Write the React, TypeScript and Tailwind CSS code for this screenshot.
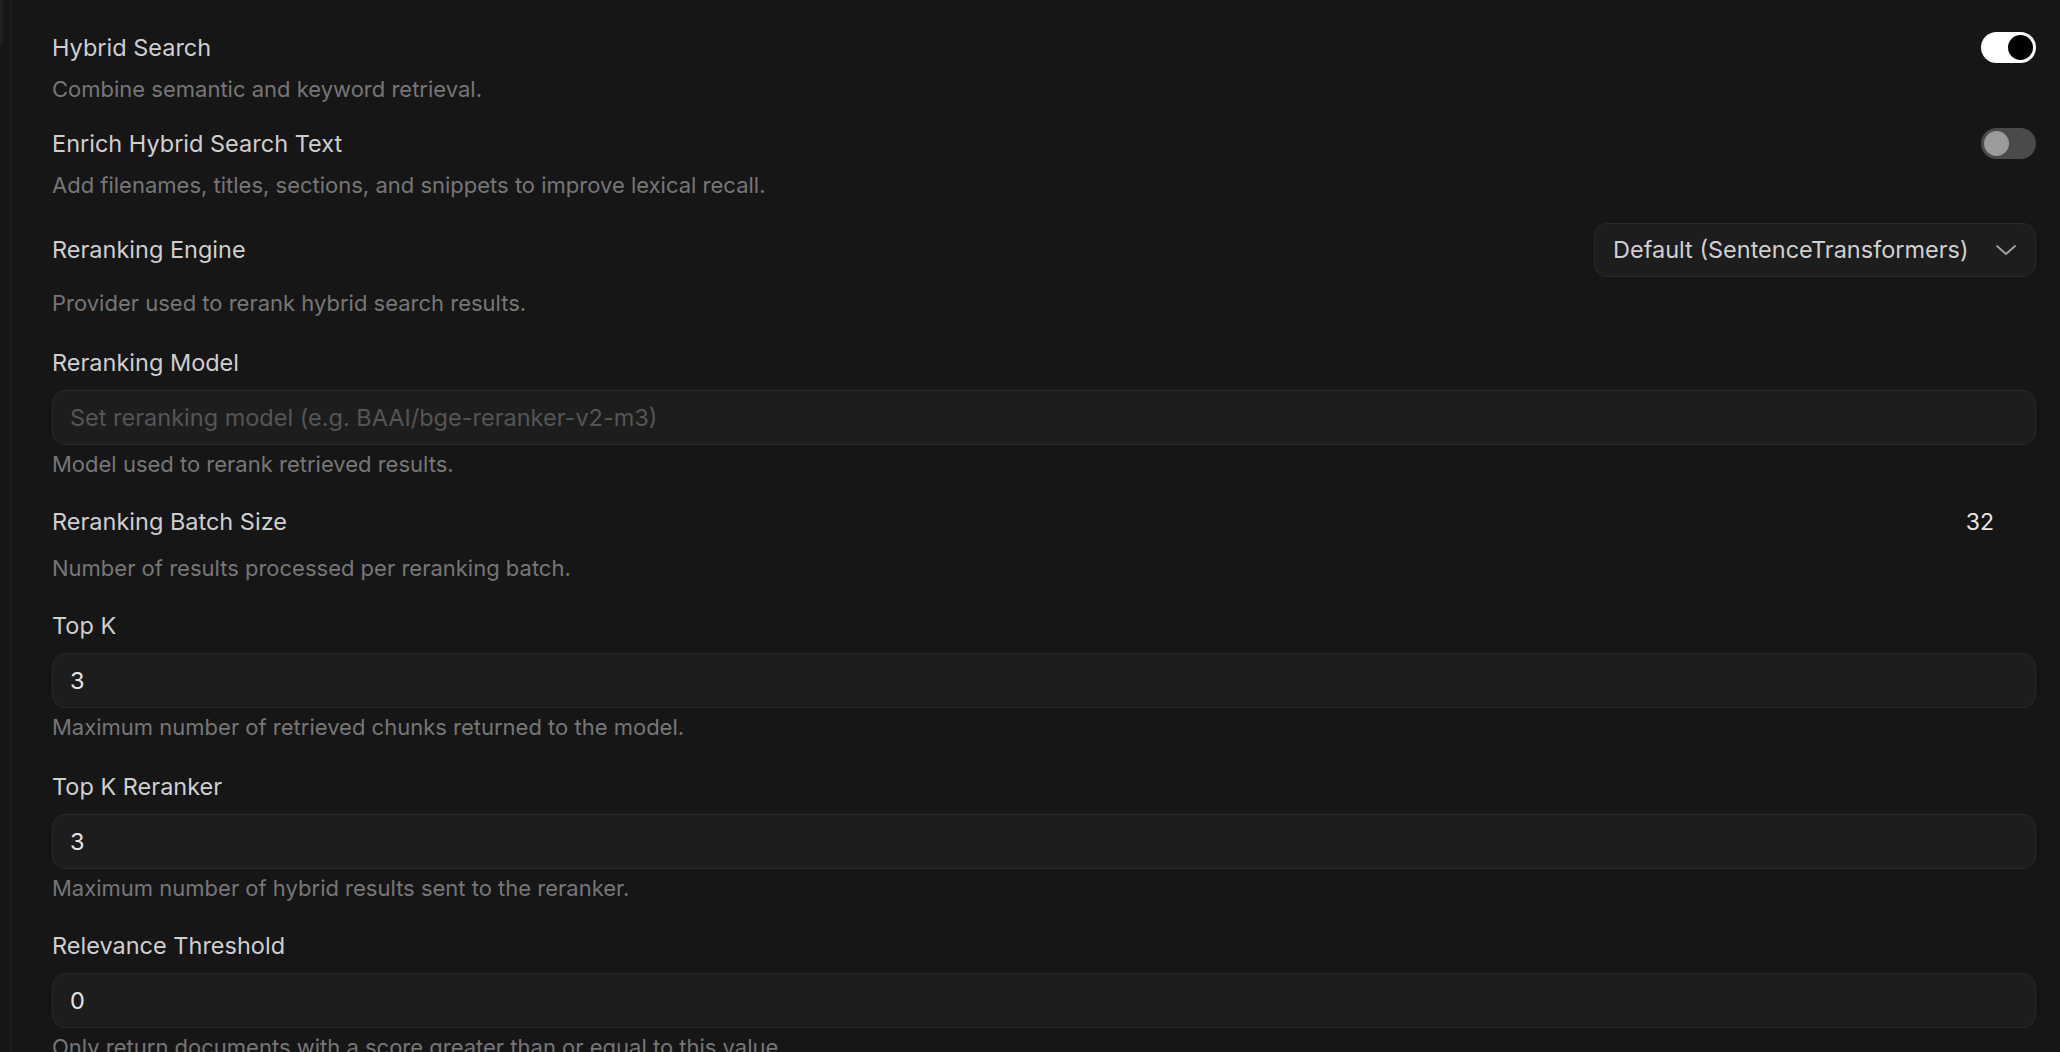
import React, { useState } from "react";

/* ================= TYPES ================= */
type Row =
  | { kind: "toggle"; label: string; desc: string; on: boolean; mt: string }
  | { kind: "select"; label: string; desc: string; value: string; mt: string }
  | { kind: "number"; label: string; desc: string; value: string; mt: string }
  | { kind: "input"; label: string; desc: string; value?: string; placeholder?: string; mt: string };

const ROWS: Row[] = [
  { kind: "toggle", label: "Hybrid Search", desc: "Combine semantic and keyword retrieval.", on: true, mt: "mt-[32px]" },
  {
    kind: "toggle",
    label: "Enrich Hybrid Search Text",
    desc: "Add filenames, titles, sections, and snippets to improve lexical recall.",
    on: false,
    mt: "mt-[25px]",
  },
  {
    kind: "select",
    label: "Reranking Engine",
    desc: "Provider used to rerank hybrid search results.",
    value: "Default (SentenceTransformers)",
    mt: "mt-[24px]",
  },
  {
    kind: "input",
    label: "Reranking Model",
    desc: "Model used to rerank retrieved results.",
    placeholder: "Set reranking model (e.g. BAAI/bge-reranker-v2-m3)",
    mt: "mt-[31px]",
  },
  { kind: "number", label: "Reranking Batch Size", desc: "Number of results processed per reranking batch.", value: "32", mt: "mt-[24px]" },
  { kind: "input", label: "Top K", desc: "Maximum number of retrieved chunks returned to the model.", value: "3", mt: "mt-[29px]" },
  { kind: "input", label: "Top K Reranker", desc: "Maximum number of hybrid results sent to the reranker.", value: "3", mt: "mt-[31px]" },
  {
    kind: "input",
    label: "Relevance Threshold",
    desc: "Only return documents with a score greater than or equal to this value.",
    value: "0",
    mt: "mt-[29px]",
  },
];

/* ================= PIECES ================= */
function Toggle({ on }: { on: boolean }) {
  const [checked, setChecked] = useState(on);
  return (
    <button
      onClick={() => setChecked(!checked)}
      className={`flex h-[31px] w-[55px] shrink-0 items-center rounded-full px-[3px] ${
        checked ? "justify-end bg-white" : "justify-start bg-[#4a4a4a]"
      }`}
    >
      <span className={`block h-[25px] w-[25px] rounded-full ${checked ? "bg-black" : "bg-[#9b9b9b]"}`} />
    </button>
  );
}

function Chevron() {
  return (
    <svg width="22" height="12" viewBox="0 0 22 12" fill="none" className="shrink-0">
      <polyline points="2,2 11,10 20,2" stroke="#a3a3a3" strokeWidth="1.8" strokeLinecap="round" strokeLinejoin="round" />
    </svg>
  );
}

const label = "text-[23.5px] leading-[30px] text-[#cfcfcf]";
const desc = "text-[22px] leading-[28px] text-[#767676]";

/* ================= COMPONENT ================= */
export default function App() {
  return (
    <div
      className="flex h-[1052px] w-full overflow-hidden bg-[#161616]"
      style={{ fontFamily: "Inter, 'Noto Sans', sans-serif" }}
    >
      {/* sidebar edge */}
      <div className="w-[11px] shrink-0 border-r border-[#212121]">
        <div className="h-[46px] w-[3px] rounded-br-[6px] bg-[#1f1f1f]" />
      </div>

      <div className="flex flex-1 flex-col pl-[41px] pr-[24px]">
        {ROWS.map(row => (
          <div key={row.label} className={`${row.mt} flex flex-col`}>
            {row.kind === "toggle" && (
              <div className="flex items-center justify-between">
                <span className={label}>{row.label}</span>
                <Toggle on={row.on} />
              </div>
            )}

            {row.kind === "select" && (
              <div className="flex items-center justify-between">
                <span className={label}>{row.label}</span>
                <div className="flex h-[54px] w-[442px] items-center justify-between rounded-[13px] border border-[#292929] bg-[#1d1d1d] pl-[18px] pr-[18px]">
                  <span className="text-[23.5px] text-[#d0d0d0]">{row.value}</span>
                  <Chevron />
                </div>
              </div>
            )}

            {row.kind === "number" && (
              <div className="flex h-[40px] items-center justify-between">
                <span className={label}>{row.label}</span>
                <span className="mr-[42px] text-[23px] text-[#e6e6e6]">{row.value}</span>
              </div>
            )}

            {row.kind === "input" && (
              <>
                <span className={label}>{row.label}</span>
                <div className="mt-[12px] flex h-[55px] items-center rounded-[13px] border border-[#292929] bg-[#1d1d1d] px-[17px]">
                  {row.value ? (
                    <span className="text-[23.5px] text-[#e4e4e4]">{row.value}</span>
                  ) : (
                    <span className="text-[23.5px] text-[#555555]">{row.placeholder}</span>
                  )}
                </div>
              </>
            )}

            <span className={`${desc} ${row.kind === "input" ? "mt-[5px]" : "mt-[12px]"}`}>{row.desc}</span>
          </div>
        ))}
      </div>
    </div>
  );
}
